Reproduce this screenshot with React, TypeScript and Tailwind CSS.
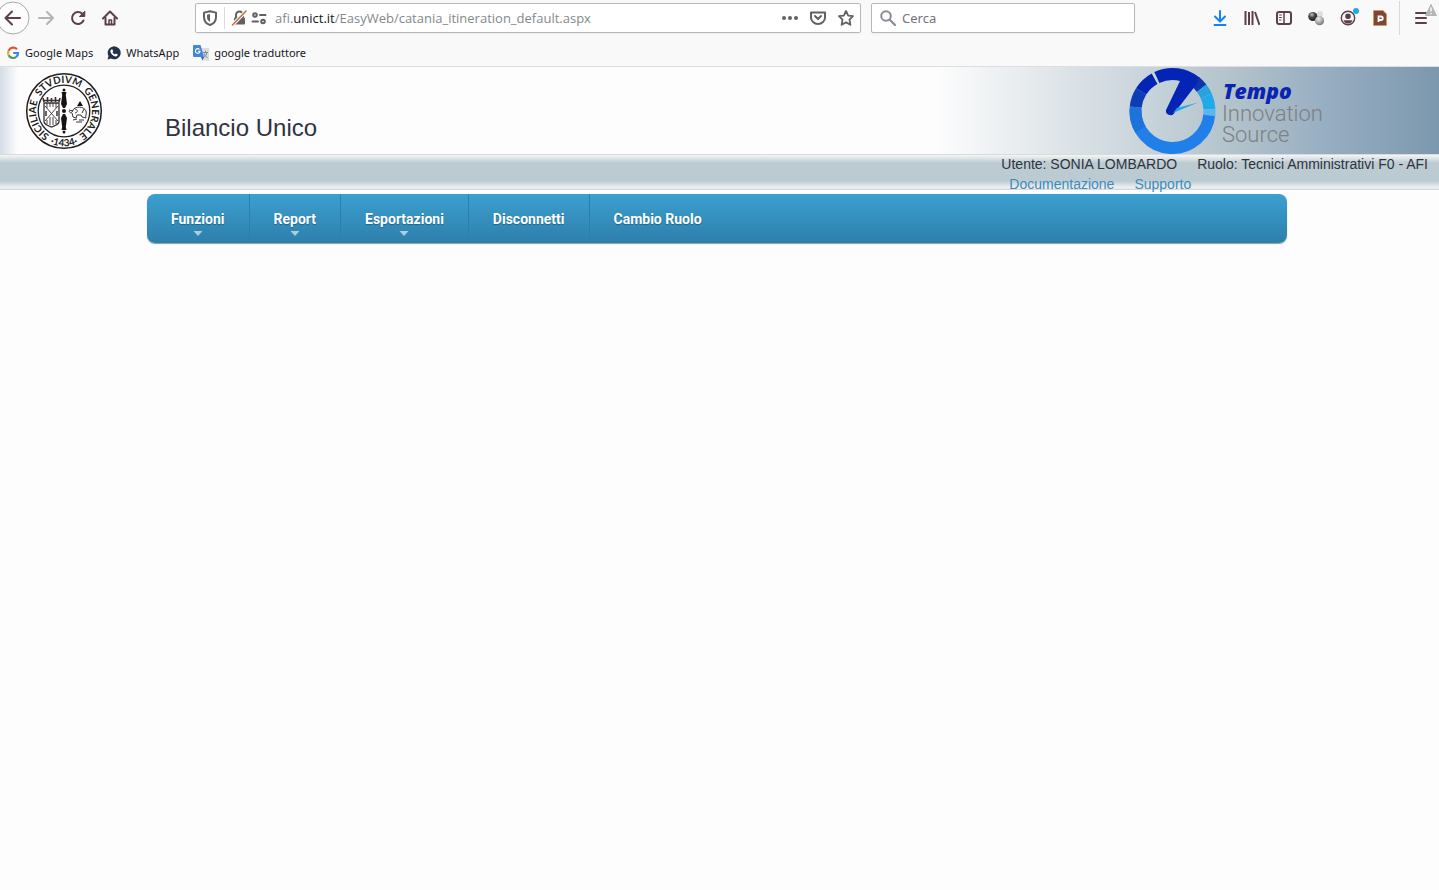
import type { ReactNode } from "react";

const INK = "#5c3f47";
const GREY = "#616164";

function ToolButton({ label, children }: { label: string; children: ReactNode }) {
  return (
    <button type="button" aria-label={label} className="relative flex h-8 w-8 shrink-0 items-center justify-center">
      {children}
    </button>
  );
}

function Icon({ children, color = INK, className = "h-4 w-4" }: { children: ReactNode; color?: string; className?: string }) {
  return (
    <svg viewBox="0 0 16 16" className={className} fill="none" stroke={color} strokeWidth="2" strokeLinecap="round" strokeLinejoin="round" aria-hidden="true">
      {children}
    </svg>
  );
}

function Toolbar() {
  return (
    <div className="flex h-9 items-center">
      <div className="-ml-0.5 flex">
        <button type="button" aria-label="Indietro" className="relative flex h-8 w-8 shrink-0 items-center justify-center">
          <svg viewBox="0 0 34 34" className="h-[34px] w-[34px] shrink-0" fill="none" aria-hidden="true">
            <circle cx="16" cy="17" r="16" fill="#fdfdfd" stroke="#a9a9ae" />
            <path d="M23 17H9M15 10.500L8.500 17L15 23.500" stroke={INK} strokeWidth="2" strokeLinecap="round" strokeLinejoin="round" />
          </svg>
        </button>
        <ToolButton label="Avanti">
          <Icon color="#b3b3b7"><path d="M1 8H15M9 2L15 8L9 14" /></Icon>
        </ToolButton>
        <ToolButton label="Ricarica">
          <Icon>
            <path d="M13.500 10.500A6 6 0 1 1 12.300 3.800" />
            <path d="M14.800 1.500V6.500H9.800Z" fill={INK} strokeWidth="1" />
          </Icon>
        </ToolButton>
        <ToolButton label="Pagina iniziale">
          <Icon>
            <path d="M1 8.500L8 1.500L15 8.500" />
            <path d="M3.500 8V14.500H12.500V8" />
            <path d="M7 14V10H9.500V14" strokeWidth="1.500" />
          </Icon>
        </ToolButton>
      </div>
      <div className="w-[69px] shrink-0" />
      <div className="flex h-[30px] min-w-0 flex-1 items-center rounded-xs border border-[#b8b8bb] bg-white px-1.5 shadow-xs">
        <Icon color={GREY} className="h-4 w-4 shrink-0">
          <path d="M8 1.200L14 2.600V7C14 11 11.500 13.800 8 15C4.500 13.800 2 11 2 7V2.600Z" />
          <path d="M8 4V12C6 11 5 9 5 7V4.700Z" fill={GREY} stroke="none" />
        </Icon>
        <div className="mx-1.5 h-[22px] w-px bg-[#dcdcde]" />
        <Icon color={GREY} className="h-4 w-4 shrink-0">
          <rect x="3" y="7.500" width="11" height="7" rx="1" fill={GREY} stroke="none" />
          <path d="M5 8V5A3.500 3.500 0 0 1 12 5V8" />
          <path d="M1.500 15L15 1" stroke="#fff" strokeWidth="3.500" />
          <path d="M1.500 15L15 1" stroke="#c9683c" strokeWidth="1.500" />
        </Icon>
        <Icon color={GREY} className="ml-1 h-4 w-4 shrink-0">
          <circle cx="4" cy="5" r="1.800" />
          <path d="M9 5H14.500M1.500 11.500H7" />
          <circle cx="12" cy="11.500" r="1.800" />
        </Icon>
        <div className="ml-2 min-w-0 flex-1 truncate font-['Open_Sans','Noto_Sans',sans-serif] text-[13px] leading-5 text-[#83898b]">
          afi.<span className="text-[#16161e]">unict.it</span>/EasyWeb/catania_itineration_default.aspx
        </div>
        <div className="flex items-center gap-3">
          <button type="button" aria-label="Azioni pagina">
            <Icon color={GREY}>
              <g fill={GREY} stroke="none">
                <circle cx="2" cy="8" r="2" /><circle cx="8" cy="8" r="2" /><circle cx="14" cy="8" r="2" />
              </g>
            </Icon>
          </button>
          <button type="button" aria-label="Salva in Pocket">
            <Icon color={GREY}>
              <path d="M1 2.500H15V7.500A7 6.500 0 0 1 1 7.500Z" />
              <path d="M5 6L8 9L11 6" />
            </Icon>
          </button>
          <button type="button" aria-label="Aggiungi ai segnalibri">
            <Icon color={GREY}>
              <path d="M8 1L10.200 5.600L15 6.200L11.500 9.700L12.400 14.800L8 12.400L3.600 14.800L4.500 9.700L1 6.200L5.800 5.600Z" strokeWidth="1.800" />
            </Icon>
          </button>
        </div>
      </div>
      <label className="ml-[10px] flex h-[30px] w-[264px] shrink-0 items-center rounded-xs border border-[#b8b8bb] bg-white px-2 shadow-xs">
        <Icon color="#8b8b93"><circle cx="6" cy="6" r="4.800" /><path d="M10 10L15 15" strokeWidth="2.200" /></Icon>
        <input type="search" aria-label="Cerca" placeholder="Cerca" className="ml-1.5 min-w-0 flex-1 bg-transparent text-[13px] leading-5 outline-none placeholder:text-[#73737a]" />
      </label>
      <div className="ml-[69px] flex shrink-0">
        <ToolButton label="Download">
          <Icon color="#1683f5"><path d="M8 1V11M3 6.500L8 11.500L13 6.500M2.500 15H13.500" /></Icon>
        </ToolButton>
        <ToolButton label="Libreria">
          <Icon><path d="M1.500 1V15M5 2V15M8.500 1V15M11 2L15.500 15" strokeLinecap="butt" /></Icon>
        </ToolButton>
        <ToolButton label="Barra laterale">
          <Icon>
            <rect x="1" y="2" width="14" height="12" rx="2" />
            <path d="M8 2V14" strokeWidth="1.500" />
            <path d="M3.500 5H5.500M3.500 7.500H5.500M3.500 10H5" strokeWidth="1" />
          </Icon>
        </ToolButton>
        <ToolButton label="Estensione">
          <svg viewBox="0 0 16 16" className="h-4 w-4" aria-hidden="true">
            <defs>
              <radialGradient id="dark" cx="0.4" cy="0.3" r="0.7"><stop offset="0" stopColor="#c5c5c5" /><stop offset="0.45" stopColor="#4b4547" /><stop offset="1" stopColor="#201c1f" /></radialGradient>
              <radialGradient id="light" cx="0.4" cy="0.3" r="0.7"><stop offset="0" stopColor="#f2f2f2" /><stop offset="1" stopColor="#777" /></radialGradient>
            </defs>
            <circle cx="12" cy="4" r="3" fill="#dedede" />
            <circle cx="4.800" cy="6.500" r="4.600" fill="url(#dark)" />
            <circle cx="11.500" cy="10.700" r="4.600" fill="url(#light)" />
          </svg>
        </ToolButton>
        <ToolButton label="Account">
          <Icon>
            <circle cx="8" cy="8" r="6.700" strokeWidth="1.400" />
            <circle cx="8" cy="6.300" r="2.800" fill={INK} stroke="none" />
            <path d="M3.500 10.200H12.500C11.500 13 9.500 13.500 8 13.500C6.500 13.500 4.500 13 3.500 10.200Z" fill={INK} stroke="none" />
          </Icon>
          <span className="absolute top-1.5 right-[5px] h-1.5 w-1.5 rounded-full bg-[#22a8f0]" />
        </ToolButton>
        <ToolButton label="PDF">
          <svg viewBox="0 0 16 16" className="h-4 w-4" aria-hidden="true">
            <path d="M1.500 .5H11L14.500 4V15.500H1.500Z" fill="#7d4638" stroke="#d79a4a" strokeDasharray="2 1" />
            <path d="M6.500 12V6.500H9A1.500 1.500 0 0 1 9 10H6.500" fill="none" stroke="#fff" strokeWidth="1.800" />
          </svg>
        </ToolButton>
      </div>
      <div className="ml-[3px] h-[34px] w-px bg-[#d9d9db]" />
      <button type="button" aria-label="Apri menu" className="relative flex h-8 w-[39px] shrink-0 items-center pl-[14px]">
        <Icon><path d="M2 3H12M2 8H12M2 13H12" /></Icon>
        <svg viewBox="0 0 12 12" className="absolute top-0.5 right-0.5 h-3 w-3" aria-hidden="true">
          <path d="M6 .5L11.500 11.500H.5Z" fill="#b5b5b7" stroke="#b5b5b7" strokeLinejoin="round" />
          <path d="M6 3.500V7.500M6 9V10.200" stroke="#fff" strokeWidth="1.400" />
        </svg>
      </button>
    </div>
  );
}

function Bookmarks() {
  return (
    <nav aria-label="Segnalibri" className="flex h-[30px] items-center gap-[14px] pt-[3px] pl-[6px] text-[11px] leading-4 text-[#16161e]">
      <a href="#maps" className="flex items-center gap-[5px]">
        <svg viewBox="0 0 14 14" className="h-[14px] w-[14px]" fill="none" strokeWidth="2.200" aria-hidden="true">
          <path d="M11 3.300A5 5 0 0 0 2.600 4.800" stroke="#d6593a" />
          <path d="M2.600 4.800A5 5 0 0 0 2.600 9.200" stroke="#e5a93b" />
          <path d="M2.600 9.200A5 5 0 0 0 10.200 10.900" stroke="#4b9b68" />
          <path d="M10.200 10.900A5 5 0 0 0 12 7H7.200" stroke="#3f84e5" />
        </svg>
        Google Maps
      </a>
      <a href="#whatsapp" className="flex items-center gap-[5px]">
        <svg viewBox="0 0 14 14" className="h-[14px] w-[14px]" aria-hidden="true">
          <path d="M.5 13.500L1.500 10A6.500 6.500 0 1 1 4 12.500Z" fill="#253144" />
          <path d="M4.200 3.500L5.300 3.300L6.200 5.300L5.500 6.200C6 7.300 6.900 8 7.900 8.400L8.800 7.600L10.700 8.600C10.700 10 9.500 10.700 8.300 10.500C5.800 10 3.700 7.800 3.300 5.600C3.200 4.700 3.600 4 4.200 3.500Z" fill="#fff" />
        </svg>
        WhatsApp
      </a>
      <a href="#traduttore" className="flex items-center gap-[5px]">
        <svg viewBox="0 0 16 16" className="h-4 w-4" aria-hidden="true">
          <path d="M6 3H16V15.500H9Z" fill="#d9dbdd" />
          <path d="M10 7.500H15M12.500 6V7.500M14 7.500C13.500 10 12 11.500 10.500 12.500M11 8.500C12 11 13 12 14.500 12.500" stroke="#7f868c" fill="none" />
          <path d="M1 0H7.500L11 12H1A1 1 0 0 1 0 11V1A1 1 0 0 1 1 0Z" fill="#4187d8" />
          <path d="M8 12H11L9.500 15.500Z" fill="#2b62bd" />
          <path d="M6.500 4.500A2.300 2.300 0 1 0 7 6.300H5" stroke="#fff" strokeWidth="1.100" fill="none" />
        </svg>
        google traduttore
      </a>
    </nav>
  );
}

function Seal() {
  return (
    <svg viewBox="-39 -39 78 78" className="h-[78px] w-[78px] shrink-0" role="img" aria-label="Siciliae Studium Generale 1434">
      <defs>
        <path id="ring" d="M0 28A28 28 0 1 1 .01 28" />
        <path id="foot" d="M-35.300 0A35.300 35.300 0 0 0 35.300 0" />
      </defs>
      <circle r="37.300" fill="#fff" stroke="#211c20" strokeWidth="1.500" />
      <circle r="25.800" fill="none" stroke="#211c20" strokeWidth="1.300" />
      <g fill="#211c20" fontFamily="Lato, Liberation Sans, sans-serif" fontSize="10" fontWeight="700">
        <text><textPath href="#ring" startOffset="15">SICILIAE</textPath></text>
        <text><textPath href="#ring" startOffset="59">STVDIVM</textPath></text>
        <text><textPath href="#ring" startOffset="109">GENERALE</textPath></text>
        <text textAnchor="middle"><textPath href="#foot" startOffset="55.400">·1434·</textPath></text>
      </g>
      <g stroke="#3a3034" fill="none" strokeWidth="0.900">
        <path d="M-20 -8H-5V11C-6 14 -10 15 -12.500 16C-15 15 -19 14 -20 11Z" strokeWidth="1.300" />
        <path d="M-20 -9L-21 -13M-16.500 -9V-14M-12.500 -9V-13M-8.500 -9V-14M-5 -9L-4 -13M-20 -10.500H-5" strokeWidth="1.600" />
        <path d="M-17 -8V-3M-14 -8V-4M-11 -8V-4M-8 -8V-3M-17 9V13M-14 6V14M-11 6V14M-8 9V13M-19 -5L-6 10M-6 -5L-19 10" />
        <path d="M-18 0V5M-7 0V5" strokeWidth="1.500" />
      </g>
      <g fill="#171216">
        <circle cx="0" cy="-21" r="1.500" />
        <path d="M-2.500 -19H2.500L1.800 -16L3 -7L1 -3H-1L-3 -7L-1.800 -16Z" />
        <circle cx="0" r="2" />
        <path d="M-1 3H1L3 7L1.800 16L2.500 19H-2.500L-1.800 16L-3 7Z" />
        <circle cx="0" cy="21" r="1.500" />
        <path d="M16 -10L19 -5H13Z" />
      </g>
      <g stroke="#3a3135" fill="none" strokeWidth="1">
        <path d="M5 0C6 3 8 2 9 -1C11 -5 20 -5 22 0C23 3 21 5 22 7L18 6L17 4L13 4L12 7L9 6L8 2" />
        <path d="M11 -2C14 -2 14 2 11 2M20 -2L18 2M5 -1L9 0M9 9L13 8M15 9H20M12 11H18" />
      </g>
    </svg>
  );
}

function arc(from: number, to: number) {
  const point = (deg: number) => {
    const rad = (deg * Math.PI) / 180;
    return `${43.5 + 37 * Math.sin(rad)} ${44 - 37 * Math.cos(rad)}`;
  };
  return `M${point(from)}A37 37 0 ${to - from > 180 ? 1 : 0} 1 ${point(to)}`;
}

const segments = [
  { from: 95, to: 272, color: "#217fea" },
  { from: 240, to: 276, color: "#1e72dc" },
  { from: 276, to: 302, color: "#0d3db4" },
  { from: 302, to: 331, color: "#0424b6" },
  { from: 335, to: 400, color: "#0424b6" },
  { from: 38, to: 52, color: "#0b36ad" },
  { from: 52, to: 66, color: "#2aa3dc" },
  { from: 66, to: 87, color: "#1faae9" },
  { from: 87, to: 97, color: "#59b6ee" },
];

function TempoLogo() {
  return (
    <svg viewBox="0 0 200 87" className="h-[87px] w-[200px] shrink-0" role="img" aria-label="Tempo Innovation Source">
      {segments.map((s) => (
        <path key={s.from} d={arc(s.from, s.to)} fill="none" stroke={s.color} strokeWidth="12" />
      ))}
      <path d="M51.500 13L70 13.500L65 20.500L45 46.500A4.500 4.500 0 0 1 37 43Z" fill="#0424b6" />
      <path d="M48 41L69 35.500L44 46Z" fill="#27a5ea" />
      <text x="94" y="32" fontFamily="Open Sans, sans-serif" fontSize="21" fontWeight="800" fontStyle="italic" fill="#0a24b0">Tempo</text>
      <text x="93" y="54" fontFamily="Roboto, sans-serif" fontSize="22" fontWeight="300" fill="#7e8082">Innovation</text>
      <text x="93" y="75" fontFamily="Roboto, sans-serif" fontSize="22" fontWeight="300" fill="#7e8082">Source</text>
    </svg>
  );
}

const menu = [
  { label: "Funzioni", sub: true },
  { label: "Report", sub: true },
  { label: "Esportazioni", sub: true },
  { label: "Disconnetti", sub: false },
  { label: "Cambio Ruolo", sub: false },
];

export default function App() {
  return (
    <div className="min-h-screen bg-[#fdfdfd] font-['Liberation_Sans',Arial,sans-serif]">
      <div className="border-b border-[#dedee0] bg-[#f9f9fa] font-['Noto_Sans','Open_Sans',sans-serif]">
        <Toolbar />
        <Bookmarks />
      </div>
      <header>
        <div className="flex h-[87px] items-center justify-between bg-[linear-gradient(to_right,#d3dde6_0px,#fdfdfd_18px,#fdfdfd_65%,#d2dbe1_77%,#b5c5cd_85%,#98aec2_92%,#7c98ae_100%)] pr-[110px] pl-[25px]">
          <div className="flex items-center">
            <Seal />
            <h1 className="ml-[62px] pt-[34px] text-[24px] leading-7 text-[#2f3340]">Bilancio Unico</h1>
          </div>
          <TempoLogo />
        </div>
        <div className="flex h-9 justify-end bg-[linear-gradient(to_bottom,#d8dadb_1px,#f4f6f6_1px,#bccbd1_9px,#bccbd1_27px,#f1f3f6_34px,#d8dadb_35px)] pr-[11px] text-[14px] leading-5 text-[#2f3340]">
          <div>
            <div className="flex gap-5">
              <span>Utente: SONIA LOMBARDO</span>
              <span>Ruolo: Tecnici Amministrativi F0 - AFI</span>
            </div>
            <div className="flex gap-5 pl-2 text-[#3b8cbf]">
              <a href="#documentazione">Documentazione</a>
              <a href="#supporto">Supporto</a>
            </div>
          </div>
        </div>
      </header>
      <div className="pt-1 pr-[5px]">
        <nav aria-label="Menu principale" className="mx-auto flex h-[49px] max-w-[1140px] overflow-hidden rounded-lg bg-linear-to-b from-[#3ca0d0] to-[#2d7fab] shadow-[0_1px_1px_#8d9aa3]">
          {menu.map((item, i) => (
            <div key={item.label} className="flex">
              {i > 0 && <div className="w-px bg-linear-to-b from-[#2a7fac] to-[#2d7fab]" />}
              <a href={`#${item.label}`} className="relative flex items-center px-6 font-['Roboto','Noto_Sans',sans-serif] text-[14px] leading-6 font-bold text-white text-shadow-[0_1px_1px_#1f638c]">
                {item.label}
                {item.sub && (
                  <svg viewBox="0 0 9 5" className="absolute bottom-[7px] left-1/2 h-[5px] w-[9px] -translate-x-1/2" aria-hidden="true">
                    <path d="M0 0H9L4.500 5Z" fill="#a9cfe0" />
                  </svg>
                )}
              </a>
            </div>
          ))}
        </nav>
      </div>
    </div>
  );
}
